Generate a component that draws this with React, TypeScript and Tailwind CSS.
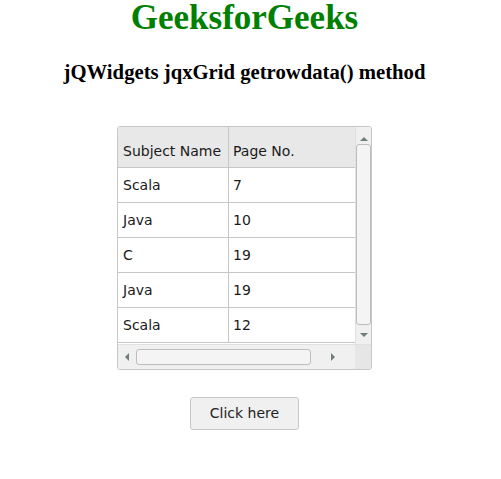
const rows = [
  { subject: "Scala", page: "7" },
  { subject: "Java", page: "10" },
  { subject: "C", page: "19" },
  { subject: "Java", page: "19" },
  { subject: "Scala", page: "12" },
];

function Arrow({ dir }: { dir: "up" | "down" | "left" | "right" }) {
  const pts = {
    up: "0,5 4,1 8,5",
    down: "0,1 4,5 8,1",
    left: "5,0 1,4 5,8",
    right: "1,0 5,4 1,8",
  }[dir];
  const vertical = dir === "up" || dir === "down";
  return (
    <svg width={vertical ? 8 : 6} height={vertical ? 6 : 8} viewBox={vertical ? "0 0 8 6" : "0 0 6 8"}>
      <polygon points={pts} fill="#6f7f76" />
    </svg>
  );
}

export default function App() {
  return (
    <div className="w-[489px] flex flex-col items-center bg-white" style={{ fontFamily: "'Liberation Serif', serif" }}>
      <h1 className="text-[35px] leading-[36px] font-bold text-[#008000]">GeeksforGeeks</h1>
      <h3 className="mt-[24px] text-[20.7px] leading-[24px] font-bold text-black">
        jQWidgets jqxGrid getrowdata() method
      </h3>

      <div
        className="mt-[42px] w-[255px] h-[244px] border border-[#c7c7c7] rounded-[3px] flex flex-col overflow-hidden text-[14px] text-[#1a1a1a]"
        style={{ fontFamily: "'DejaVu Sans', Verdana, sans-serif" }}
      >
        <div className="flex h-[217px]">
          <div className="w-[237px] flex flex-col">
            <div className="h-[41px] flex bg-[#e8e8e8] border-b border-[#c7c7c7]">
              <div className="w-[111px] border-r border-[#c7c7c7] pl-[5px] pt-[14px]">Subject Name</div>
              <div className="flex-1 pl-[4px] pt-[14px]">Page No.</div>
            </div>
            {rows.map((r, i) => (
              <div key={i} className="h-[35px] flex border-b border-[#c7c7c7]">
                <div className="w-[111px] border-r border-[#c7c7c7] pl-[5px] flex items-center">{r.subject}</div>
                <div className="flex-1 pl-[4px] flex items-center">{r.page}</div>
              </div>
            ))}
          </div>
          <div className="flex-1 bg-[#f0f0f0] flex flex-col items-center border-l border-[#e0e0e0]">
            <div className="h-[17px] flex items-end justify-center pb-[2px]">
              <Arrow dir="up" />
            </div>
            <div className="w-[15px] h-[181px] bg-[#f4f4f4] border border-[#bdbdbd] rounded-[3px]" />
            <div className="flex-1 flex items-center justify-center">
              <Arrow dir="down" />
            </div>
          </div>
        </div>
        <div className="flex flex-1 border-t border-[#e0e0e0]">
          <div className="w-[237px] bg-[#f0f0f0] flex items-center">
            <div className="w-[18px] flex justify-center">
              <Arrow dir="left" />
            </div>
            <div className="w-[175px] h-[16px] bg-[#f4f4f4] border border-[#bdbdbd] rounded-[3px]" />
            <div className="flex-1 flex justify-center">
              <Arrow dir="right" />
            </div>
          </div>
          <div className="flex-1 bg-[#e6e6e6]" />
        </div>
      </div>

      <button
        className="mt-[27px] w-[109px] h-[33px] bg-[#f0f0f0] border border-[#c7c7c7] rounded-[3px] text-[14px] text-[#222]"
        style={{ fontFamily: "'DejaVu Sans', Verdana, sans-serif" }}
      >
        Click here
      </button>
    </div>
  );
}
